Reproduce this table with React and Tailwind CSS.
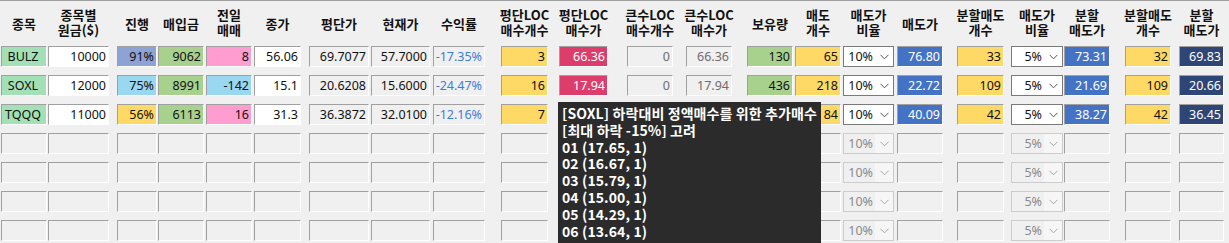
const cols = [
  { box: 'w-[46px] ml-[1px]', head: ['종목'] },
  { box: 'w-[61px] ml-[1px]', head: ['종목별', '원금($)'] },
  { box: 'w-[40px] ml-[8px]', head: ['진행'] },
  { box: 'w-[46px] ml-[1px]', head: ['매입금'] },
  { box: 'w-[46px] ml-[2px]', head: ['전일', '매매'] },
  { box: 'w-[47px] ml-[2px]', head: ['종가'] },
  { box: 'w-[60px] ml-[8px]', head: ['평단가'] },
  { box: 'w-[59px] ml-[2px]', head: ['현재가'] },
  { box: 'w-[52px] ml-[3px]', head: ['수익률'] },
  { box: 'w-[47px] ml-[16px]', head: ['평단LOC', '매수개수'] },
  { box: 'w-[49px] ml-[11px]', head: ['평단LOC', '매수가'] },
  { box: 'w-[46px] ml-[19px]', head: ['큰수LOC', '매수개수'] },
  { box: 'w-[46px] ml-[13px]', head: ['큰수LOC', '매수가'] },
  { box: 'w-[46px] ml-[15px]', head: ['보유량'] },
  { box: 'w-[46px] ml-[2px]', head: ['매도', '개수'] },
  { box: 'w-[51px] ml-[2px]', head: ['매도가', '비율'] },
  { box: 'w-[46px] ml-[3px]', head: ['매도가'] },
  { box: 'w-[47px] ml-[14px]', head: ['분할매도', '개수'] },
  { box: 'w-[52px] ml-[7px]', head: ['매도가', '비율'] },
  { box: 'w-[46px] ml-[1px]', head: ['분할', '매도가'] },
  { box: 'w-[46px] ml-[15px]', head: ['분할매도', '개수'] },
  { box: 'w-[45px] ml-[8px]', head: ['분할', '매도가'] },
];

const S = {
  name: 'bg-[#a3e0b5] text-[#111] justify-center',
  white: 'bg-white text-[#111] justify-end',
  ro: 'bg-[#f0f0f0] text-[#111] justify-end',
  pct: 'bg-[#f0f0f0] text-[#3d7edb] justify-end',
  dis: 'bg-[#f0f0f0] text-[#6d6d6d] justify-end',
  yellow: 'bg-[#ffd966] text-[#111] justify-end',
  green: 'bg-[#a9d18e] text-[#111] justify-end',
  pink: 'bg-[#ff9dd0] text-[#111] justify-end',
  sky: 'bg-[#9ad7f1] text-[#111] justify-end',
  steel: 'bg-[#8da3d5] text-[#111] justify-end',
  red: 'bg-[#dc3d6b] text-white justify-end',
  blue: 'bg-[#4472c4] text-white justify-end',
  navy: 'bg-[#2e4676] text-white justify-end',
  empty: 'bg-[#f0f0f0]',
};

const rows = [
  [['BULZ', S.name], ['10000', S.white], ['91%', S.steel], ['9062', S.green], ['8', S.pink], ['56.06', S.white],
   ['69.7077', S.ro], ['57.7000', S.ro], ['-17.35%', S.pct], ['3', S.yellow], ['66.36', S.red], ['0', S.dis],
   ['66.36', S.dis], ['130', S.green], ['65', S.yellow], ['sel', '10%'], ['76.80', S.blue], ['33', S.yellow],
   ['sel', '5%'], ['73.31', S.blue], ['32', S.yellow], ['69.83', S.navy]],
  [['SOXL', S.name], ['12000', S.white], ['75%', S.sky], ['8991', S.green], ['-142', S.sky], ['15.1', S.white],
   ['20.6208', S.ro], ['15.6000', S.ro], ['-24.47%', S.pct], ['16', S.yellow], ['17.94', S.red], ['0', S.dis],
   ['17.94', S.dis], ['436', S.green], ['218', S.yellow], ['sel', '10%'], ['22.72', S.blue], ['109', S.yellow],
   ['sel', '5%'], ['21.69', S.blue], ['109', S.yellow], ['20.66', S.navy]],
  // cells 10-13 of this row sit under the tooltip
  [['TQQQ', S.name], ['11000', S.white], ['56%', S.yellow], ['6113', S.green], ['16', S.pink], ['31.3', S.white],
   ['36.3872', S.ro], ['32.0100', S.ro], ['-12.16%', S.pct], ['7', S.yellow], ['', S.red], ['', S.dis],
   ['', S.dis], ['', S.green], ['84', S.yellow], ['sel', '10%'], ['40.09', S.blue], ['42', S.yellow],
   ['sel', '5%'], ['38.27', S.blue], ['42', S.yellow], ['36.45', S.navy]],
];

const emptyRow = cols.map((c, i) =>
  i === 15 ? ['sel', '10%', true] : i === 18 ? ['sel', '5%', true] : ['', S.empty]
);
const allRows = [...rows, emptyRow, emptyRow, emptyRow, emptyRow];

function Chevron({ color }) {
  return (
    <svg width="9" height="6" viewBox="0 0 9 6" fill="none">
      <polyline points="0.5,0.8 4.5,4.8 8.5,0.8" stroke={color} strokeWidth="1" />
    </svg>
  );
}

function Select({ value, disabled }) {
  if (disabled) {
    return (
      <div className="flex h-[21px] w-full border border-[#cccccc] bg-[#f0f0f0] text-[#8a8a8a]">
        <div className="flex flex-1 items-center justify-end pr-[2px] leading-[19px]">{value}</div>
        <div className="flex w-[18px] items-center justify-center bg-[#f6f6f6]">
          <Chevron color="#a8a8a8" />
        </div>
      </div>
    );
  }
  return (
    <div className="flex h-[21px] w-full border border-[#7a7a7a] bg-white text-[#111]">
      <div className="flex flex-1 items-center justify-end pr-[2px] leading-[19px]">{value}</div>
      <div className="flex w-[18px] items-center justify-center">
        <Chevron color="#555555" />
      </div>
    </div>
  );
}

function Cell({ cell }) {
  if (cell[0] === 'sel') return <Select value={cell[1]} disabled={cell[2]} />;
  return (
    <div
      className={`flex h-[21px] w-full items-center border border-t-[#a0a0a0] border-l-[#a0a0a0] border-b-white border-r-white pr-[2px] leading-[19px] ${cell[1]}`}
    >
      {cell[0]}
    </div>
  );
}

function Header({ lines }) {
  return (
    <div
      className={`flex h-[45px] w-full flex-col items-center justify-center whitespace-nowrap text-[13px] font-bold leading-[15px] text-[#111] ${
        lines.length > 1 ? 'pb-[4px]' : ''
      }`}
      style={{ fontFamily: '"Noto Sans CJK KR", "Noto Sans", sans-serif' }}
    >
      {lines.map((l) => (
        <div key={l}>{l}</div>
      ))}
    </div>
  );
}

const tipLines = [
  '[SOXL] 하락대비 정액매수를 위한 추가매수',
  '[최대 하락 -15%] 고려',
  '01 (17.65, 1)',
  '02 (16.67, 1)',
  '03 (15.79, 1)',
  '04 (15.00, 1)',
  '05 (14.29, 1)',
  '06 (13.64, 1)',
];

export default function App() {
  return (
    <div
      className="relative h-[243px] w-[1229px] overflow-hidden border-t border-[#a0a0a0] bg-[#f0f0f0] text-[12.5px]"
      style={{ fontFamily: '"Noto Sans", "Noto Sans CJK KR", sans-serif' }}
    >
      <div className="flex">
        {cols.map((c, ci) => (
          <div key={ci} className={`flex shrink-0 flex-col ${c.box}`}>
            <Header lines={c.head} />
            <div className="flex flex-col gap-[8px]">
              {allRows.map((r, ri) => (
                <Cell key={ri} cell={r[ci]} />
              ))}
            </div>
          </div>
        ))}
      </div>

      <div
        className="absolute left-[558px] top-[101px] h-[141px] w-[263px] bg-[#2b2b2b] pl-[4px] pt-[3px] text-[14px] font-semibold leading-[16.8px] tracking-[0.1px] text-white"
        style={{ fontFamily: '"Noto Sans CJK KR", "Noto Sans", sans-serif' }}
      >
        {tipLines.map((l) => (
          <div key={l} className="whitespace-nowrap">
            {l}
          </div>
        ))}
      </div>
    </div>
  );
}
